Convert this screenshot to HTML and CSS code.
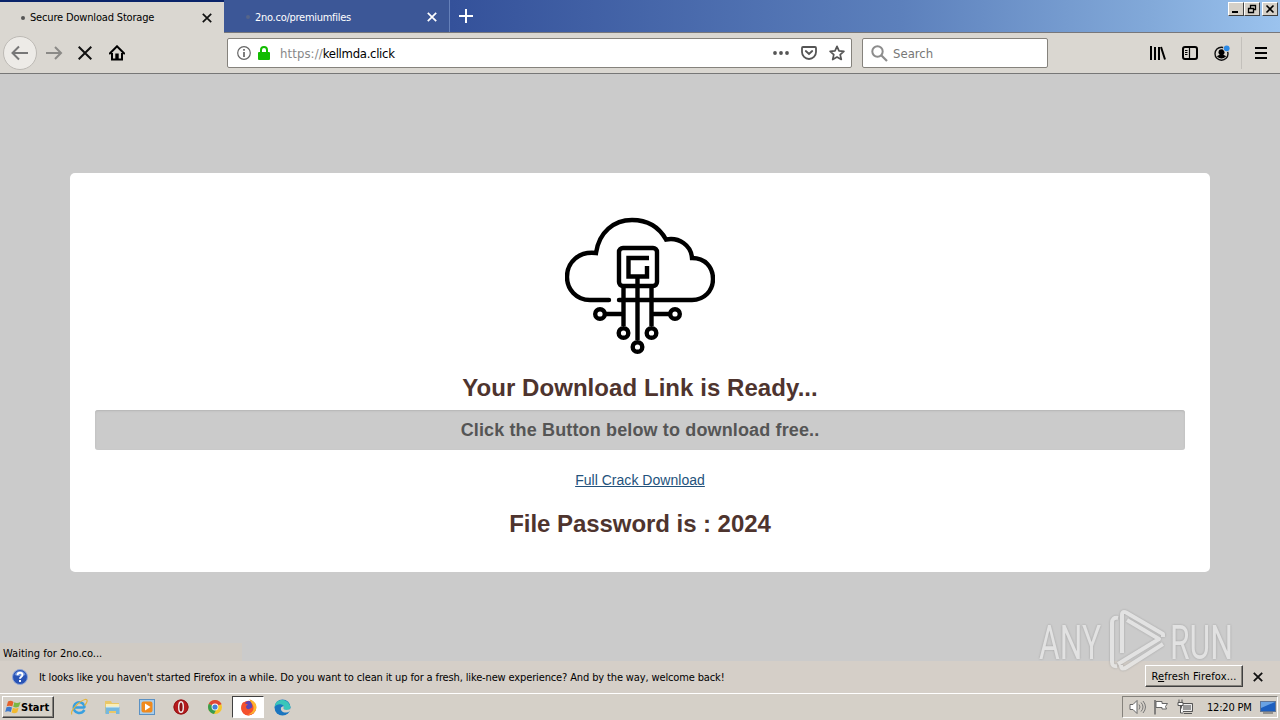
FILE: index.html
```html
<!DOCTYPE html>
<html lang="en">
<head>
    <meta charset="UTF-8">
    <meta name="viewport" content="width=device-width, initial-scale=1.0">
    <title>Secure Download Storage</title>
    <link rel="stylesheet" href="styles.css">
</head>
<body>
    <div class="tabs">
        <div class="tab active">
            <span class="dot"></span>
            <span class="tab-title first-title">Secure Download Storage</span>
            <svg class="tab-close" width="10" height="10" viewBox="0 0 10 10"><path d="M.8.8l8.4 8.4M9.2.8L.8 9.2" stroke="#111" stroke-width="1.7"/></svg>
        </div>
        <div class="tab loading">
            <span class="dot"></span>
            <span class="tab-title second-title">2no.co/premiumfiles</span>
            <svg class="tab-close" width="10" height="10" viewBox="0 0 10 10"><path d="M.8.8l8.4 8.4M9.2.8L.8 9.2" stroke="#fff" stroke-width="1.7"/></svg>
        </div>
        <svg class="new-tab" width="14" height="14" viewBox="0 0 14 14"><path d="M7 0v14M0 7h14" stroke="#fff" stroke-width="2"/></svg>
        <div class="window-btns">
            <span class="win"><svg width="14" height="12" viewBox="0 0 14 12"><path d="M3 9h6" stroke="#000" stroke-width="2"/></svg></span>
            <span class="win"><svg width="14" height="12" viewBox="0 0 14 12"><path d="M5.500 5V2.500h5v4H9M5 2.500h6M3.500 5.500h5v4h-5zM3 5.500h6" fill="none" stroke="#000" stroke-width="1.3"/></svg></span>
            <span class="win close"><svg width="14" height="12" viewBox="0 0 14 12"><path d="M3.500 2.500l7 7M10.500 2.500l-7 7" stroke="#000" stroke-width="1.6"/></svg></span>
        </div>
    </div>

    <div class="toolbar">
        <div class="nav-btns">
            <span class="back"><svg width="18" height="16" viewBox="0 0 18 16"><path d="M17 8H2M8 1.500L1.500 8 8 14.500" fill="none" stroke="#777" stroke-width="2"/></svg></span>
            <svg width="17" height="16" viewBox="0 0 17 16"><path d="M0 8h15M9 2l6 6-6 6" fill="none" stroke="#8b8a87" stroke-width="2"/></svg>
            <svg class="stop" width="14" height="14" viewBox="0 0 14 14"><path d="M.7.7l12.600 12.600M13.300.7L.7 13.300" stroke="#111" stroke-width="2"/></svg>
            <svg class="home" width="16" height="16" viewBox="0 0 16 16"><path d="M.8 8.500L8 1.300l7.200 7.200" fill="none" stroke="#000" stroke-width="2" stroke-linecap="round"/><path d="M3 8v6.500h10V8" fill="none" stroke="#000" stroke-width="2"/><path d="M6.300 14V8.500h3.400V14z"/></svg>
        </div>
        <div class="url-bar">
            <svg width="14" height="14" viewBox="0 0 14 14"><circle cx="7" cy="7" r="6.300" fill="none" stroke="#666" stroke-width="1.200"/><path d="M7 6v5M7 3v1.800" stroke="#666" stroke-width="1.700"/></svg>
            <svg class="lock" width="12" height="14" viewBox="0 0 12 14"><path d="M3 7V4a3 3 0 0 1 6 0v3" fill="none" stroke="#12bc00" stroke-width="2"/><rect y="6" width="12" height="8" rx="1" fill="#12bc00"/></svg>
            <span class="url"><span class="scheme">https://</span>kellmda.click</span>
            <svg class="dots" width="16" height="4" viewBox="0 0 16 4"><circle cx="2" cy="2" r="1.900"/><circle cx="8" cy="2" r="1.900"/><circle cx="14" cy="2" r="1.900"/></svg>
            <svg class="pocket" width="16" height="14" viewBox="0 0 16 14"><path d="M2 1h12a1 1 0 0 1 1 1v4a7 7 0 0 1-14 0V2a1 1 0 0 1 1-1z" fill="none" stroke="#555" stroke-width="1.800"/><path d="M4.800 5L8 8l3.200-3" fill="none" stroke="#555" stroke-width="1.800" stroke-linecap="round"/></svg>
            <svg class="star" width="16" height="16" viewBox="0 0 16 16"><path d="M8 1.300l2 4.500 4.900.5-3.700 3.300 1.100 4.900L8 12l-4.300 2.500 1.100-4.900L1.100 6.300 6 5.800z" fill="none" stroke="#555" stroke-width="1.700" stroke-linejoin="round"/></svg>
        </div>
        <div class="search-bar">
            <svg width="17" height="17" viewBox="0 0 17 17"><circle cx="6.500" cy="6.500" r="5.200" fill="none" stroke="#8c8c8c" stroke-width="2"/><path d="M10.500 10.500l5.500 5.500" stroke="#8c8c8c" stroke-width="2.200"/></svg>
            <span class="search-text">Search</span>
        </div>
        <div class="tools">
            <svg width="16" height="14" viewBox="0 0 16 14"><path d="M1 0v14M5 1v13M9 1v13M11 1l4 12.500" stroke="#000" stroke-width="2"/></svg>
            <svg width="16" height="14" viewBox="0 0 16 14"><rect x="1" y="1" width="14" height="12" rx="2" fill="none" stroke="#000" stroke-width="2"/><path d="M7.500 1v12M3 4.500h2.500M3 6.500h2.500M3 8.500h2.500" stroke="#000" stroke-width="1.200"/></svg>
            <svg width="17" height="17" viewBox="0 0 17 17"><circle cx="7.500" cy="8.700" r="6.500" fill="none" stroke="#111" stroke-width="1.400"/><circle cx="7.500" cy="7.300" r="3"/><path d="M2.800 11.200Q7.500 8.500 12.200 11.200 7.500 16 2.800 11.200z"/><circle cx="12.700" cy="3.300" r="3.700" fill="#dad6d0"/><circle cx="12.700" cy="3.300" r="2.900" fill="#2b8ae6"/></svg>
            <span class="separator"></span>
            <svg width="12" height="12" viewBox="0 0 12 12"><path d="M0 1h12M0 6h12M0 11h12" stroke="#000" stroke-width="2"/></svg>
        </div>
    </div>

    <div class="page">
        <div class="card">
            <svg class="cloud" width="150" height="138" viewBox="0 0 150 138" fill="none" stroke="#000" stroke-width="4.400">
                <path d="M44 83H25C11 83 2 72 2 60C2 45 14 34 31 36C34 15 49 3 67 3C82 3 94 10 101 22.500C114 20 126 28 127 41C140 41 148 50 148 62C148 74 139 83 127 83H54" stroke-linecap="round"/>
                <rect x="54" y="31" width="38" height="38" rx="4"/>
                <path d="M84 41H63.500V59.500H82V49M72.500 60v63M58.500 69v40M86.500 69v40M58.500 97H41M86.500 97h18"/>
                <circle cx="35" cy="97" r="4.800"/>
                <circle cx="110" cy="97" r="4.800"/>
                <circle cx="58.500" cy="116" r="4.800"/>
                <circle cx="86.500" cy="116" r="4.800"/>
                <circle cx="72.500" cy="130" r="4.800"/>
            </svg>
            <h2 class="ready">Your Download Link is Ready...</h2>
            <div class="well">Click the Button below to download free..</div>
            <a class="link" href="#">Full Crack Download</a>
            <h2 class="password">File Password is : 2024</h2>
        </div>
        <div class="status">Waiting for 2no.co...</div>
    </div>

    <div class="notice">
        <svg class="help" width="16" height="16" viewBox="0 0 16 16"><circle cx="8" cy="8" r="7.500" fill="#2853b5" stroke="#8fa5d5"/><path d="M2.500 6a5.800 5.800 0 0 1 11 0Q8 8 2.500 6z" fill="#6c91dc"/><path d="M5.500 6.200C5.500 2.800 10.500 3 10.500 6 10.500 7.800 8 7.800 8 9.800M8 11v2" fill="none" stroke="#fff" stroke-width="1.900"/></svg>
        <span class="notice-text">It looks like you haven't started Firefox in a while. Do you want to clean it up for a fresh, like-new experience? And by the way, welcome back!</span>
        <button class="refresh">R<u>e</u>fresh Firefox...</button>
        <svg class="notice-close" width="10" height="10" viewBox="0 0 10 10"><path d="M.8.8l8.400 8.400M9.200.8L.8 9.200" stroke="#111" stroke-width="1.800"/></svg>
    </div>

    <div class="taskbar">
        <div class="start">
            <svg width="16" height="15" viewBox="0 0 16 15"><path d="M3 1.500Q6 0 8.500 2L7.300 6.500Q4.500 5 1.700 6.300z" fill="#e4612b"/><path d="M9.300 2.300Q12 3.700 15.500 2L14 6.600Q11 8.300 8.200 6.800z" fill="#79b743"/><path d="M1.500 7.200Q4.500 6 7 7.500L5.800 12Q3 10.500.2 12z" fill="#3c78cc"/><path d="M7.900 7.800Q11 9.300 13.700 7.600L12.300 12.200Q9.500 14 6.600 12.500z" fill="#f1b92f"/></svg>
            <span class="start-text">Start</span>
        </div>
        <div class="apps">
            <span class="app"><svg width="18" height="18" viewBox="0 0 18 18"><path d="M14.500 12Q12 15.500 8.500 15C4.500 14.500 3 11 4 8S8 3.500 11 4.500 15 9 14 9.500H4.500" fill="none" stroke="#38a0e0" stroke-width="2.500"/><path d="M2 16.500C-1 14 9 3 15 1.500c4-.5 1.500 4-.5 6" fill="none" stroke="#e3b43c" stroke-width="1.200"/></svg></span>
            <span class="app"><svg width="17" height="17" viewBox="0 0 17 17"><path d="M1 2h6l1 2h7v10H1z" fill="#e9c768"/><path d="M2 5h13v3H2z" fill="#fbeeb5"/><path d="M1.500 8h14v7H12v-3H5v3H1.500z" fill="#75b8df"/><path d="M2 8h13" stroke="#d4edf8"/></svg></span>
            <span class="app"><svg width="16" height="16" viewBox="0 0 16 16"><rect x=".5" y=".5" width="15" height="15" fill="#a9cdea" stroke="#5b91c3"/><rect x="2.500" y="2.500" width="11" height="11" rx="2" fill="#f08a1d"/><path d="M6 4.500v7L11.500 8z" fill="#fff"/></svg></span>
            <span class="app"><svg width="16" height="16" viewBox="0 0 16 16"><circle cx="8" cy="8" r="7.500" fill="#b71a1d"/><circle cx="8" cy="8" r="7" fill="none" stroke="#8f1516"/><ellipse cx="8" cy="8" rx="2.300" ry="5.300" fill="#8c1113" stroke="#eee" stroke-width="1.400"/></svg></span>
            <span class="app"><svg width="14" height="14" viewBox="0 0 14 14"><circle cx="7" cy="7" r="7" fill="#f4c62d"/><path d="M7 7L.8 3.800A7 7 0 0 1 13.200 3.800z" fill="#de4635"/><path d="M.8 3.800A7 7 0 0 0 6 13.900L9 8z" fill="#379c50"/><path d="M7 3.800h6.200" stroke="#de4635" stroke-width="1.500"/><circle cx="7" cy="7" r="3.400" fill="#fff"/><circle cx="7" cy="7" r="2.600" fill="#4380d8"/></svg></span>
            <span class="app current"><svg width="17" height="17" viewBox="0 0 17 17"><circle cx="8.500" cy="9" r="7.300" fill="#f0432d"/><circle cx="9" cy="6.800" r="4.700" fill="#5b46b5"/><path d="M1.300 9C1 5 3.500 1.500 4.200 4L8 5.500Q5 7 6.500 9.300T12 8.500C13 6 11 3 9.500.5 14 2 17 6 16 10s-5 6.500-8 6.500S1.300 13 1.300 9z" fill="#f5502c"/><path d="M9.500.5C15 2 17.500 6 16 10.500 15 14 11 16 8 15.500 13 14 14.500 10 13 6.500 12 4 10.500 3 9.500.5z" fill="#fdb52e"/></svg></span>
            <span class="app"><svg width="17" height="17" viewBox="0 0 17 17"><circle cx="8.500" cy="8.500" r="8" fill="#1a75bf"/><path d="M.7 8C1-.5 13-2 16.300 7c1 4-4 5-6 3.500C9 9 11 8 9 6.300S2 5 .7 8z" fill="#3ac6ba"/><path d="M7 8.500c-1 5 5 6.500 9 3.500l1-2.500c-2 1.700-5.500 1.700-7 .7-1-1 .5-2-.7-3.200z" fill="#d5d0c8"/></svg></span>
        </div>
        <div class="tray">
            <svg width="17" height="16" viewBox="0 0 17 16"><path d="M1 5.500h3l4-4v13l-4-4H1z" fill="#fff" stroke="#666"/><path d="M10 5.500q2 2.500 0 5M12 3.500q4 4.500 0 9M14 2q5 6 0 12" fill="none" stroke="#777"/></svg>
            <svg width="17" height="16" viewBox="0 0 17 16"><path d="M2 1v14.500" stroke="#666" stroke-width="1.500"/><path d="M3 2.500h6v2h5.500l-2 3 1 2.500H9V8.500H3z" fill="#fff" stroke="#666"/></svg>
            <svg width="17" height="16" viewBox="0 0 17 16"><path d="M4.500 4.500h11v8h-11zM7 14.500h8" fill="#999" stroke="#555"/><path d="M5.500 5.500h9v6h-9z" stroke="#eee" fill="#999"/><path d="M2 .5v3M5 .5v3M1 3.500h5v3H1zM3.500 7v7h3" fill="#fff" stroke="#555"/></svg>
            <span class="clock">12:20 PM</span>
            <svg width="16" height="14" viewBox="0 0 16 14"><rect x=".5" y="1.500" width="15" height="10" fill="#1d5fbf" stroke="#607595"/><path d="M1 2h14L1 8z" fill="#69a2e3"/><path d="M3 13h10" stroke="#555"/></svg>
        </div>
    </div>

    <svg class="watermark" width="244" height="76" viewBox="0 0 244 76">
        <g class="mark-text">
            <text x="5" y="54" textLength="62" lengthAdjust="spacingAndGlyphs">ANY</text>
            <text x="136" y="54" textLength="63" lengthAdjust="spacingAndGlyphs">RUN</text>
        </g>
        <g class="mark-logo">
            <path d="M84 13Q78 12 78 18V57Q78 62 83 61"/>
            <path d="M88 48V10Q88 5 93 8L129 29V32M93 15L125 34L84 59"/>
            <path d="M129 39L93 62Q87 66 87 60"/>
        </g>
    </svg>
</body>
</html>
```

FILE: styles.css
```css
*{
    box-sizing: border-box;
}
body{
    margin: 0;
    width: 1280px;
    height: 720px;
    overflow: hidden;
    display: flex;
    flex-direction: column;
    position: relative;
    font-family: "DejaVu Sans Condensed", "DejaVu Sans", sans-serif;
    font-stretch: condensed;
    font-size: 11px;
    color: #000;
    background-color: #cbcbcb;
}
svg{
    display: block;
    flex: none;
}
span{
    white-space: nowrap;
}
.tabs{
    height: 33px;
    flex: none;
    display: flex;
    border-bottom: 1px solid #77777b;
    background: linear-gradient(90deg, #34519a 0, #34519a 450px, #5c80bc 900px, #82a9d9 1150px, #9bc3ee 1280px);
}
.tab{
    width: 226px;
    height: 32px;
    display: flex;
    align-items: center;
    padding: 2px 12px 0 22px;
    border-right: 1px solid #6580b9;
    color: #fff;
    background: #3c5797;
}
.tab.active{
    width: 224px;
    height: 33px;
    border-top: 2px solid #0a246a;
    border-right: 0;
    padding-top: 0;
    color: #000;
    background: #dad7d1;
    padding-left: 21px;
}
.dot{
    width: 4px;
    height: 4px;
    border-radius: 50%;
    background: #555;
    margin-right: 5px;
}
.loading .dot{
    background: #56658a;
}
.first-title{
    letter-spacing: -.17px;
}
.second-title{
    letter-spacing: -.27px;
}
.tab-close{
    margin-left: auto;
}
.new-tab{
    margin: 9px 0 0 9px;
}
.window-btns{
    margin: 2px 2px 0 auto;
    display: flex;
}
.win{
    width: 16px;
    height: 14px;
    border: 1px solid;
    border-color: #fff #404040 #404040 #fff;
    background: #d5d0c8;
}
.close{
    margin-left: 2px;
}
.toolbar{
    height: 41px;
    flex: none;
    display: flex;
    align-items: center;
    border-bottom: 1px solid #777;
    background: #dad7d1;
}
.nav-btns{
    width: 227px;
    display: flex;
    align-items: center;
    padding-left: 3px;
}
.back{
    width: 34px;
    height: 34px;
    display: grid;
    place-items: center;
    border: 1px solid #bdbab5;
    border-radius: 50%;
    background: #edebe7;
    margin-right: 9px;
}
.stop{
    margin-left: 15px;
}
.home{
    margin-left: 17px;
}
.url-bar,
.search-bar{
    height: 30px;
    display: flex;
    align-items: center;
    border: 1px solid #85827c;
    border-radius: 2px;
    background: #fff;
    font-size: 13px;
}
.url-bar{
    width: 625px;
    padding: 0 6px 0 9px;
}
.lock{
    margin: 0 10px 0 7px;
}
.url{
    letter-spacing: -.3px;
}
.scheme{
    color: #888;
    letter-spacing: .1px;
}
.dots{
    margin-left: auto;
    fill: #555;
}
.pocket{
    margin-left: 12px;
}
.star{
    margin-left: 12px;
}
.search-bar{
    width: 186px;
    margin-left: 10px;
    padding-left: 8px;
}
.search-text{
    margin-left: 5px;
    color: #777;
}
.tools{
    margin-left: auto;
    display: flex;
    align-items: center;
    gap: 16px;
    padding-right: 13px;
}
.separator{
    width: 1px;
    height: 32px;
    margin: 0 -3px 0 -6px;
    background: #c3c0bb;
}
.page{
    flex: 1;
    display: flex;
    flex-direction: column;
    align-items: center;
    padding-top: 99px;
    font-family: "Liberation Sans", Arial, sans-serif;
    font-stretch: normal;
    background: #cbcbcb;
}
.card{
    width: 1140px;
    height: 399px;
    flex: none;
    display: flex;
    flex-direction: column;
    align-items: center;
    padding: 44px 25px 0;
    border-radius: 5px;
    background: #fff;
}
.ready,
.password{
    margin: 0;
    font-size: 24px;
    line-height: 30px;
    font-weight: bold;
    white-space: nowrap;
    color: #4e342e;
}
.ready{
    margin-top: 18px;
    letter-spacing: .06px;
}
.well{
    width: 1090px;
    height: 40px;
    margin-top: 7px;
    text-align: center;
    font-size: 18px;
    line-height: 40px;
    font-weight: bold;
    letter-spacing: .14px;
    color: #555;
    border-radius: 3px;
    background: #cbcbcb;
    box-shadow: inset 0 1px 2px #b5b5b5;
}
.link{
    margin-top: 20px;
    font-size: 14px;
    line-height: 20px;
    letter-spacing: .03px;
    color: #23527c;
}
.password{
    margin-top: 19px;
    letter-spacing: -.05px;
}
.status{
    width: 242px;
    height: 18px;
    margin-top: auto;
    align-self: flex-start;
    padding: 2px 0 0 3px;
    font: condensed 11px/16px "DejaVu Sans Condensed", "DejaVu Sans", sans-serif;
    line-height: 18px;
    background: #d0cbc4;
}
.notice{
    height: 32px;
    flex: none;
    display: flex;
    align-items: center;
    padding: 0 17px 0 12px;
    background: #d5cfc8;
}
.notice-text{
    margin-left: 11px;
    letter-spacing: -.135px;
}
.refresh{
    width: 98px;
    height: 22px;
    margin: 0 10px 2px auto;
    padding: 0;
    border: 1px solid;
    border-color: #fff #404040 #404040 #fff;
    box-shadow: inset -1px -1px #85827c;
    font: inherit;
    letter-spacing: .15px;
    white-space: nowrap;
    background: #d5d0c8;
}
.taskbar{
    height: 27px;
    flex: none;
    display: flex;
    border-top: 1px solid #fff;
    background: #d5d0c8;
}
.start{
    width: 52px;
    height: 22px;
    margin: 2px 0 0 2px;
    display: flex;
    align-items: center;
    padding-left: 2px;
    border: 1px solid;
    border-color: #fff #404040 #404040 #fff;
    box-shadow: inset -1px -1px #85827c;
    font-weight: bold;
}
.apps{
    display: flex;
    margin: 2px 0 0 9px;
}
.app{
    width: 32px;
    height: 22px;
    margin-right: 1.9px;
    display: grid;
    place-items: center;
}
.app.current{
    border: 1px solid;
    border-color: #404040 #fff #fff #404040;
    background: #fff;
}
.tray{
    width: 156px;
    height: 22px;
    margin: 2px 2px 0 auto;
    display: flex;
    align-items: center;
    padding-left: 6px;
    border: 1px solid;
    border-color: #85827c #fff #fff #85827c;
    gap: 7px;
}
.clock{
    margin: 0 1px 0 6px;
    letter-spacing: -.2px;
}
.watermark{
    position: absolute;
    left: 1034px;
    top: 605px;
    opacity: .8;
    filter: drop-shadow(0 0 1px #999);
    pointer-events: none;
}
.mark-text{
    font-family: Roboto, sans-serif;
    font-stretch: normal;
    font-weight: 400;
    font-size: 48px;
    fill: #e8e8e8;
}
.mark-logo{
    fill: none;
    stroke: #e8e8e8;
    stroke-width: 4px;
    stroke-linejoin: round;
}
```
